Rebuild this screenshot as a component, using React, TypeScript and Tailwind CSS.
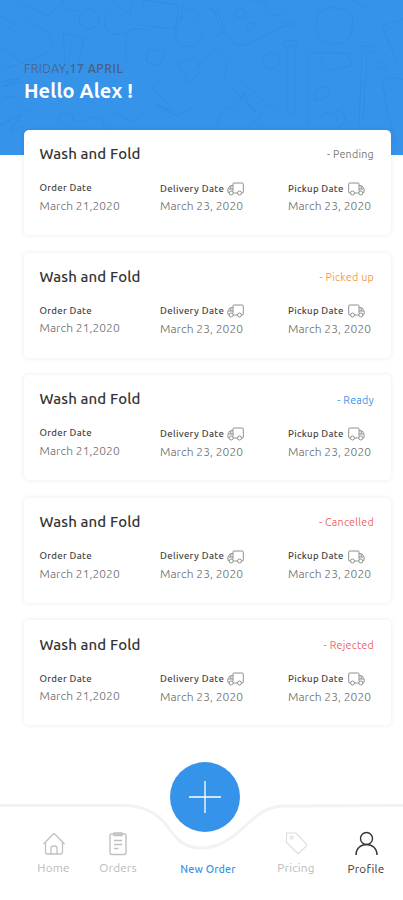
import React from "react";

const orders = [
  { status: "Pending", color: "text-[#777777]" },
  { status: "Picked up", color: "text-[#f2994a]" },
  { status: "Ready", color: "text-[#3593ea]" },
  { status: "Cancelled", color: "text-[#f26464]" },
  { status: "Rejected", color: "text-[#f26464]" },
];

const Truck = ({ flip = false }: { flip?: boolean }) => (
  <svg
    width="17"
    height="14"
    viewBox="0 0 17 14"
    fill="none"
    stroke="#858585"
    strokeWidth="0.9"
    className={flip ? "-scale-x-100" : ""}
  >
    <path d="M2.500 11H1.400a.7.7 0 0 1-.7-.7V2a1 1 0 0 1 1-1h8.600a.7.7 0 0 1 .7.7v7.800M6.500 11h4.200" />
    <path d="M11 3.700h2.100c1 0 1.500.6 1.800 1.400l1.200 2v3c0 .5-.3.9-.9.9M11 7h4.600M13.200 4v3" />
    <circle cx="4.500" cy="11" r="2" />
    <circle cx="12.800" cy="11" r="2" />
  </svg>
);

// Faint line drawings behind the greeting
const Doodles = () => (
  <svg
    width="403"
    height="155"
    viewBox="0 0 403 155"
    fill="none"
    stroke="#2e85da"
    strokeWidth="1"
    strokeOpacity="0.45"
    className="absolute left-0 top-0"
  >
    <path d="M0 15l14 10-8 6M20 4l28 12 10-9M28 21c10 5 22 11 24 19 1 8-4 13-13 17L2 70M0 46l18 14M61 0c4 9 8 12 18 10" />
    <circle cx="89" cy="19" r="10" />
    <path d="M111 12c-7 4-8 14-3 19 6 6 16 4 21-2M112 0l18 15 3-15M66 67l-3-34 20 5v11M69 63l2-24M83 40l-5 23" />
    <path d="M138 25l37 4 2-11M142 10l2-10 34 5-1 13M126 63V35c2-6 12-8 23-4M149 49l16 4-5 13-14-4z" />
    <path d="M184 16c-8 9-13 23-2 29 9 4 21 0 21-11M180 20l3-13 16 5-2 9M205 8l13 4 7 18-8 7" />
    <circle cx="240" cy="13" r="5" />
    <circle cx="251" cy="27" r="4" />
    <path d="M212 8c5 14 12 29 24 36 8 3 16-1 24-6l24-12 8-1-1-4-8 2M262 2l12 14 11-4" />
    <path d="M319 12c-7 17 0 31 15 32 15 0 20-10 18-29M319 12c8-6 24-6 33 3M352 0l18 11" />
    <path d="M283 42l14-2 1 5-13 3zM287 49v65l8-3V47M308 53h45M362 52l-3 74M367 53l-4 66M308 55v71M360 46h15l-1 6-11-1zM322 58c0 9 5 14 14 11 3-3 14 0 15-5 0-7-4-9-8-11" />
    <path d="M315 100c-1-7 3-14 9-13 7 1 6 7 2 10-4 2-7 3-11 3M330 118c-1-7 9-9 13-4 5 6 1 10-5 14" />
    <circle cx="271" cy="61" r="8" />
    <circle cx="382" cy="65" r="4" />
    <path d="M161 76l-9 12 23 23-17-5 12 12M178 63l11 20 12-13-8-13zM192 72l21-23 14 13-2 18M240 79l37 34M231 87l25 25M153 103l25 13 14-8" />
    <path d="M218 125c-2-9 5-17 15-18l11-13 7 15 12 5-14 12M80 70l12-5M246 0l20 0" />
    <circle cx="66" cy="119" r="7" />
    <path d="M0 82l20-4-18 9 21-5M3 98c18-7 14 11 27 13M0 125l21-10-11 16 14-4M85 122c4-8 19-5 18 3 7 0 10 6 7 11M113 111l19 11 15-11" />
    <path d="M384 81c4-3 13-4 19-1M384 81c-4 9 4 13 1 21l12 46M382 26l16 40M382 26l21-7M321 117c9-8 17-5 16 4" />
  </svg>
);

const OrderCard = ({ order }: { order: (typeof orders)[number] }) => (
  <div className="h-[105px] rounded-[5px] bg-white px-[15.500px] pt-[13.400px] shadow-[0_0_4px_1px_rgba(0,0,0,0.06)]">
    <div className="flex h-[22px] items-center justify-between">
      <h2 className="text-[15px] font-medium tracking-[0.120px] text-[#333333]">
        Wash and Fold
      </h2>
      <span
        className={`mr-[1.500px] text-[10.700px] tracking-[0.250px] ${order.color}`}
      >
        - {order.status}
      </span>
    </div>
    <div className="mt-[16px] grid grid-cols-[120.500px_128px_1fr] whitespace-nowrap">
      <div>
        <p className="flex h-[14px] items-center text-[9.600px] font-medium tracking-[0.300px] text-[#454545]">
          Order Date
        </p>
        <p className="mt-[1.500px] text-[12px] font-light leading-[18px] tracking-[0.070px] text-[#666666]">
          March 21,2020
        </p>
      </div>
      <div>
        <p className="flex h-[15px] items-center gap-[3px] text-[9.600px] font-medium tracking-[0.340px] text-[#454545]">
          Delivery Date <Truck flip />
        </p>
        <p className="mt-[1px] text-[12px] font-light leading-[18px] tracking-[0.070px] text-[#666666]">
          March 23, 2020
        </p>
      </div>
      <div>
        <p className="flex h-[15px] items-center gap-[4px] text-[9.600px] font-medium tracking-[0.280px] text-[#454545]">
          Pickup Date <Truck />
        </p>
        <p className="mt-[1px] text-[12px] font-light leading-[18px] tracking-[0.070px] text-[#666666]">
          March 23, 2020
        </p>
      </div>
    </div>
  </div>
);

const BottomNav = () => (
  <nav className="relative mt-[36.600px] h-[139px]">
    {/* Curved top edge */}
    <svg
      width="403"
      height="139"
      viewBox="0 0 403 139"
      fill="none"
      className="absolute left-0 top-0"
    >
      <path
        d="M0 43.500H124c19 0 32 7 42 19 10 14 17 23.500 35 23.500 18 0 30-9 43-21 13-12 22-21 42-21 24-.5 60-.5 117-.5"
        stroke="#f2f2f2"
        strokeWidth="3"
      />
    </svg>
    <button className="absolute left-[170px] top-0 flex size-[70px] items-center justify-center rounded-full bg-[#3593ea]">
      <svg width="32" height="32" fill="none" stroke="white" strokeWidth="1.300">
        <path d="M16 0v32M0 16h32" />
      </svg>
    </button>
    <div className="pointer-events-none relative grid grid-cols-[65px_64px_116px_60px_80px] pl-[21px] pt-[69px] text-center text-[11.700px] tracking-[0.200px] text-[#b9b9b9]">
      <div className="flex flex-col items-center">
        <svg width="24" height="25" fill="none" stroke="#c0c0c0" strokeWidth="1.300">
          <path d="M1.500 13L11 3.200c.7-.6 1.300-.6 2 0L22.500 13M3.500 11v10.500c0 1 .5 1.500 1.500 1.500h14c1 0 1.500-.5 1.500-1.500V11M9 22.500V17c0-1.500 1-2 3-2s3 .5 3 2v5.500" />
        </svg>
        <span className="mt-[3px] leading-[18px]">Home</span>
      </div>
      <div className="flex flex-col items-center">
        <svg width="20" height="25" fill="none" stroke="#c0c0c0" strokeWidth="1.400">
          <rect x="2" y="3" width="16" height="20.500" rx="1.500" />
          <path d="M6 2h8v2.500H6zM6 9.500h8M6 13.500h8M6 17.500h4.500" />
        </svg>
        <span className="mt-[3px] leading-[18px]">Orders</span>
      </div>
      <div className="flex flex-col justify-end">
        <span className="text-[10.700px] font-medium leading-[18px] text-[#3593ea]">
          New Order
        </span>
      </div>
      <div className="flex flex-col items-center">
        <svg width="25" height="25" fill="none" stroke="#dddddd" strokeWidth="1.100">
          <path d="M2.500 2h9.500l10.500 11c.6.7.6 1.200 0 1.800l-7.300 7.200c-.7.7-1.300.7-2 0L2.500 11.500z" />
          <circle cx="7.500" cy="6.500" r="1.500" />
        </svg>
        <span className="mt-[3px] leading-[18px]">Pricing</span>
      </div>
      <div className="flex flex-col items-center text-[#353535]">
        <svg width="25" height="25" fill="none" stroke="#353535" strokeWidth="1.400">
          <circle cx="12.500" cy="7.500" r="6" />
          <path d="M2 24c0-6.500 4.500-10.500 10.500-10.500S23 17.500 23 24" />
        </svg>
        <span className="mt-[4px] leading-[18px]">Profile</span>
      </div>
    </div>
  </nav>
);

const App = () => {
  return (
    <div className="h-[900px] w-[403px] overflow-hidden bg-white font-['Ubuntu','Noto_Sans',sans-serif]">
      <header className="relative h-[155px] bg-[#3593ea] pl-[24px] pt-[60px]">
        <Doodles />
        <p className="relative text-[12.200px] leading-[17px] tracking-[0.500px] text-[#47617f]">
          <span className="font-light">FRIDAY</span>
          <span className="font-medium">,17 APRIL</span>
        </p>
        <h1 className="relative text-[20px] font-bold leading-[28px] tracking-[0.100px] text-white">
          Hello Alex !
        </h1>
      </header>
      <main className="relative -mt-[25px] ml-[24px] flex w-[367px] flex-col gap-[17.600px]">
        {orders.map((order) => (
          <OrderCard key={order.status} order={order} />
        ))}
      </main>
      <BottomNav />
    </div>
  );
};

export default App;
